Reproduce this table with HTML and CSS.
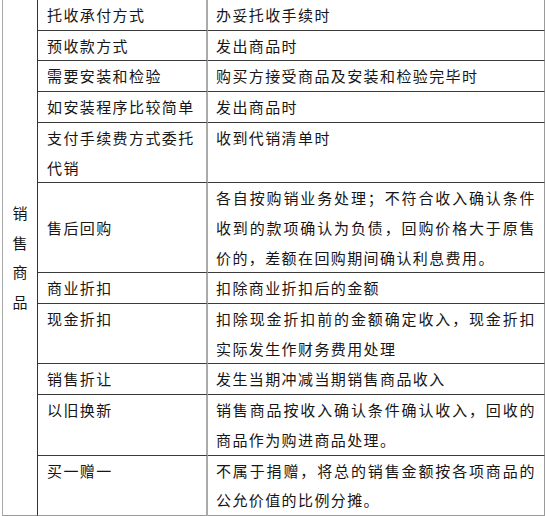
FILE: index.html
```html
<!DOCTYPE html>
<html lang="zh-CN">
<head>
<meta charset="utf-8">
<title>销售商品</title>
<link rel="stylesheet" href="styles.css">
</head>
<body>
<table class="grid">
  <tr>
    <td class="side" rowspan="11"><div class="vert">销售商品</div></td>
    <td class="k w2">托收承付方式</td>
    <td class="v w3">办妥托收手续时</td>
  </tr>
  <tr><td class="k">预收款方式</td><td class="v">发出商品时</td></tr>
  <tr><td class="k">需要安装和检验</td><td class="v">购买方接受商品及安装和检验完毕时</td></tr>
  <tr><td class="k">如安装程序比较简单</td><td class="v">发出商品时</td></tr>
  <tr><td class="k">支付手续费方式委托代销</td><td class="v">收到代销清单时</td></tr>
  <tr><td class="k mid">售后回购</td><td class="v">各自按购销业务处理；不符合收入确认条件收到的款项确认为负债，回购价格大于原售价的，差额在回购期间确认利息费用。</td></tr>
  <tr><td class="k">商业折扣</td><td class="v">扣除商业折扣后的金额</td></tr>
  <tr><td class="k">现金折扣</td><td class="v">扣除现金折扣前的金额确定收入，现金折扣实际发生作财务费用处理</td></tr>
  <tr><td class="k">销售折让</td><td class="v">发生当期冲减当期销售商品收入</td></tr>
  <tr><td class="k">以旧换新</td><td class="v">销售商品按收入确认条件确认收入，回收的商品作为购进商品处理。</td></tr>
  <tr class="last"><td class="k">买一赠一</td><td class="v">不属于捐赠，将总的销售金额按各项商品的公允价值的比例分摊。</td></tr>
</table>
</body>
</html>
```

FILE: styles.css
```css
html, body {
  margin: 0;
  padding: 0;
  background: #ffffff;
}

.grid {
  margin-left: 2px;
  width: 543px;
  table-layout: fixed;
  border-collapse: separate;
  border-spacing: 0;
  border-left: 1px solid #a8a8a8;
  font-family: "Noto Sans CJK SC", "Noto Sans", sans-serif;
  font-size: 15px;
  line-height: 29.7px;
  color: #161616;
}

.grid td {
  padding: 0;
  vertical-align: top;
}

.side {
  width: 34px;
  border-right: 1px solid #333333;
  border-bottom: 1px solid #9a9a9a;
  vertical-align: middle !important;
  text-align: center;
}

.vert {
  width: 16px;
  margin: 0 auto;
  word-break: break-all;
  line-height: 29.7px;
}

.k {
  padding: 0 8px 0 9px !important;
  border-right: 2px solid #ababab;
  border-bottom: 1px solid #3a3a3a;
  letter-spacing: 1.4px;
}

.w2 {
  width: 151px;
}

.v {
  padding: 0 8px !important;
  border-right: 1px solid #9a9a9a;
  border-bottom: 1px solid #3a3a3a;
  letter-spacing: 1.4px;
  text-align: justify;
}

.w3 {
  width: 320px;
}

.mid {
  vertical-align: middle !important;
}

.last .k,
.last .v {
  border-bottom-color: #9a9a9a;
}
```
